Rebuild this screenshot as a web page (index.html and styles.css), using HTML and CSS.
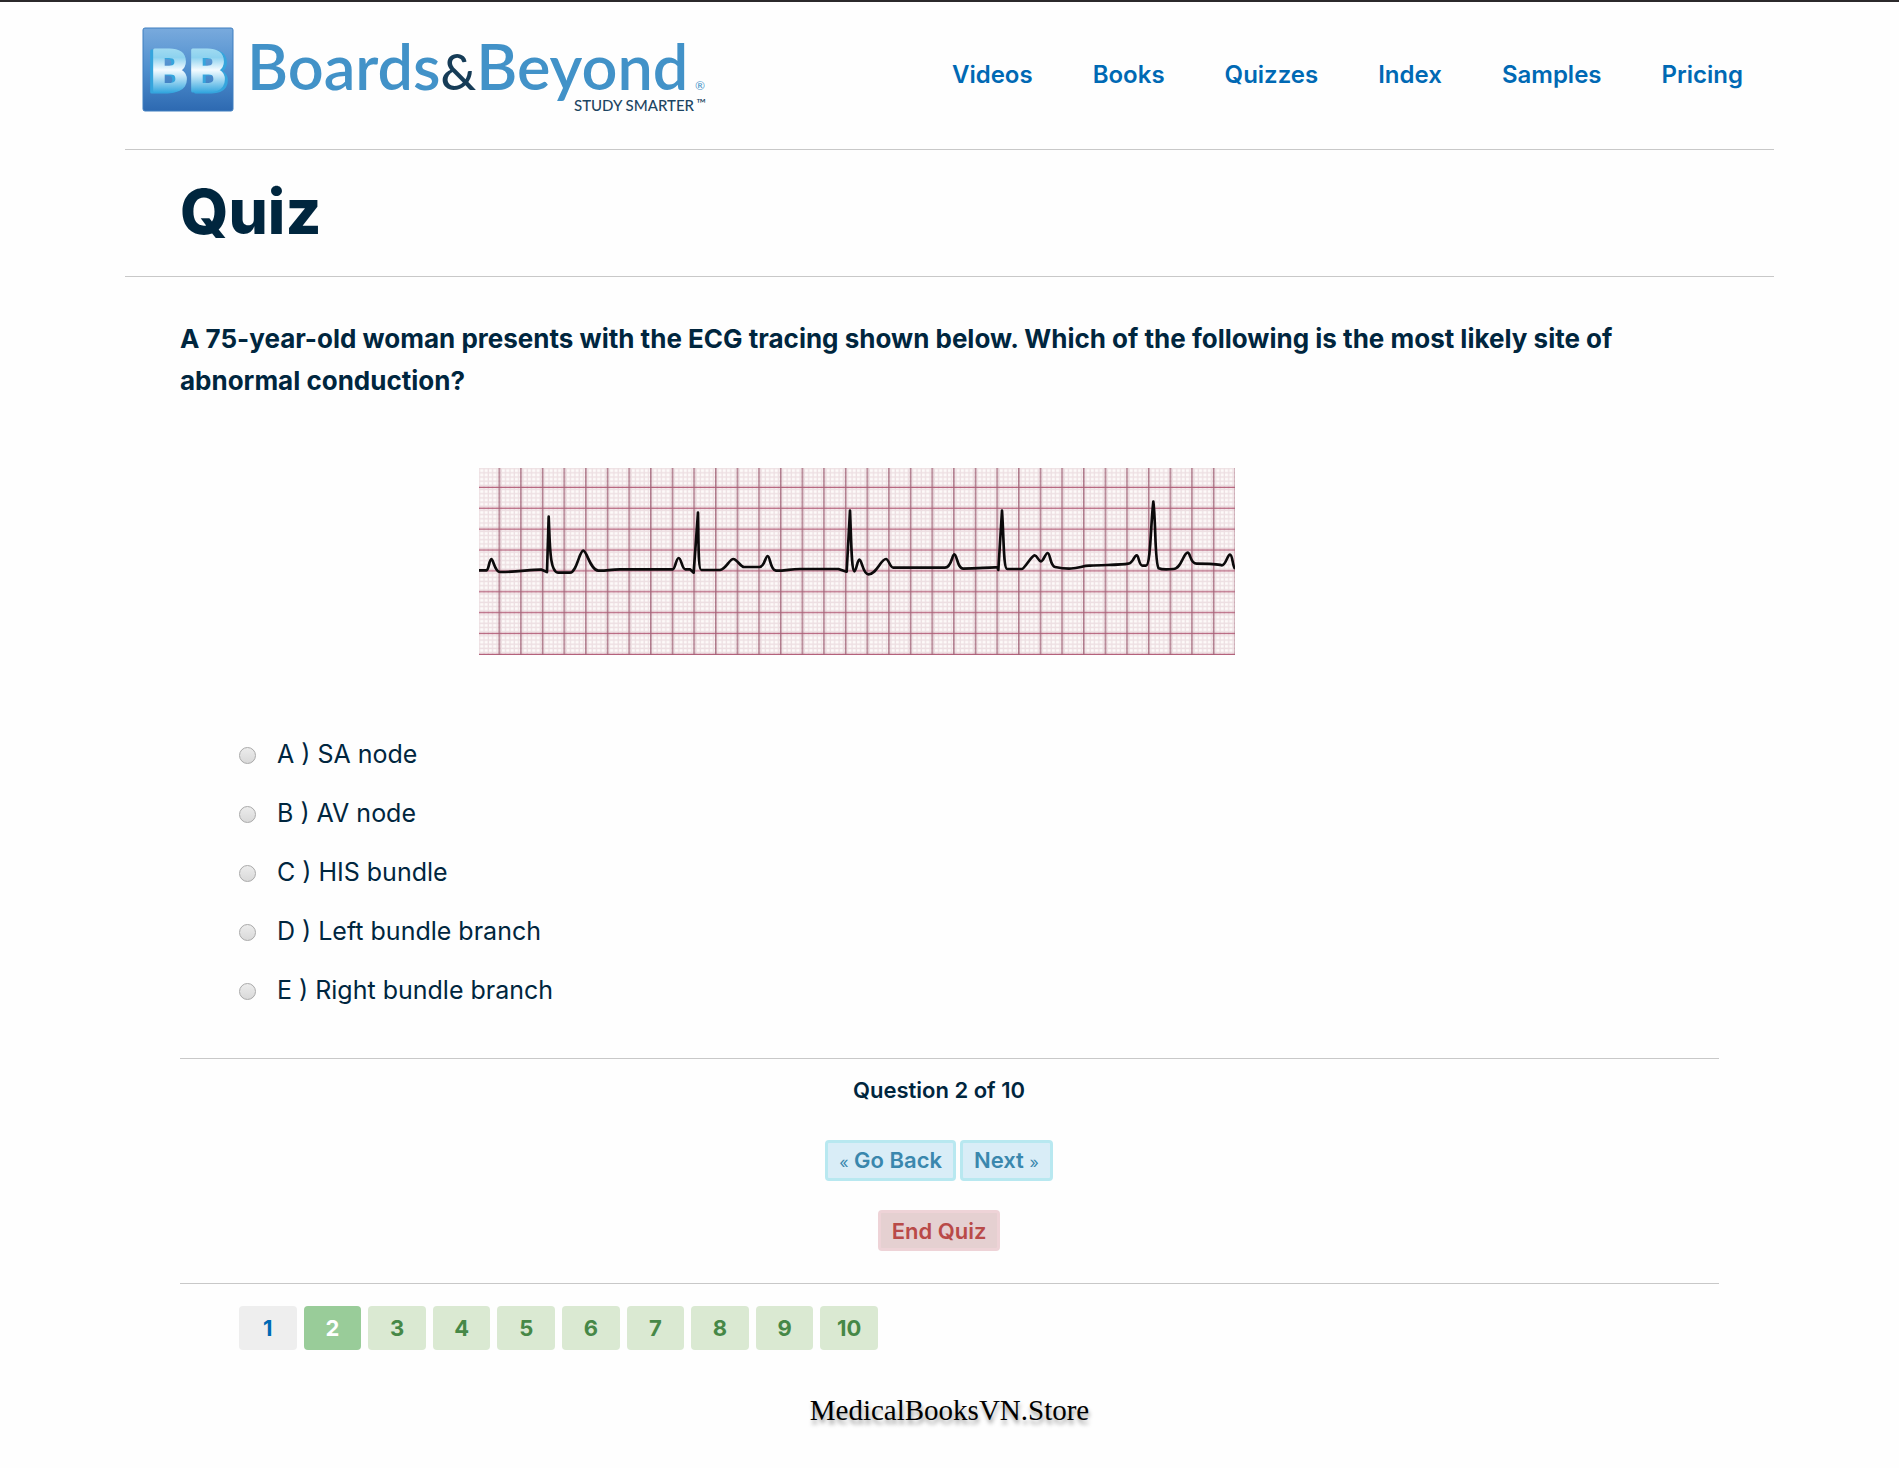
FILE: index.html
```
<!DOCTYPE html>
<html lang="en">
<head>
<meta charset="utf-8">
<meta name="viewport" content="width=device-width, initial-scale=1">
<title>Quiz - Boards&amp;Beyond</title>
<link rel="stylesheet" href="styles.css">
</head>
<body>
<div class="page">
  <header class="header">
    <a class="logo" href="#" aria-label="Boards&amp;Beyond, Study Smarter">
      <svg width="568" height="88" viewBox="0 0 568 88">
        <defs>
          <linearGradient id="tile" x1="0" y1="0" x2="0" y2="1">
            <stop offset="0" stop-color="#79aadd"/><stop offset=".5" stop-color="#4f8fce"/><stop offset="1" stop-color="#2d69b1"/>
          </linearGradient>
          <linearGradient id="face" gradientUnits="userSpaceOnUse" x1="0" y1="18" x2="0" y2="68">
            <stop offset="0" stop-color="#a8def2"/><stop offset=".25" stop-color="#8dd2ef"/><stop offset=".5" stop-color="#f4fbff"/><stop offset=".62" stop-color="#c4e7f8"/><stop offset="1" stop-color="#1f9ddb"/>
          </linearGradient>
        </defs>
        <rect x="1" y="1" width="90" height="83" rx="2" fill="url(#tile)" stroke="#3f7fc0"/>
        <text class="mark mark-left" x="9" y="64">B</text>
        <text class="mark mark-right" x="47" y="64">B</text>
        <text class="logo-name" x="105" y="63">Boards<tspan class="logo-amp">&amp;</tspan>Beyond</text>
        <text class="logo-reg" x="553" y="63">®</text>
        <text class="logo-tag" x="432" y="84">STUDY SMARTER</text>
        <text class="logo-tm" x="554" y="81">™</text>
      </svg>
    </a>
    <nav class="nav">
      <a href="#">Videos</a>
      <a href="#">Books</a>
      <a href="#">Quizzes</a>
      <a href="#">Index</a>
      <a href="#">Samples</a>
      <a href="#">Pricing</a>
    </nav>
  </header>

  <div class="title"><h1>Quiz</h1></div>

  <main class="content">
    <form>
      <p class="question" id="question">A 75-year-old woman presents with the ECG tracing shown below. Which of the following is the most likely site of abnormal conduction?</p>

      <svg class="ecg" viewBox="0 0 2268 561" role="img" aria-label="ECG tracing">
        <defs>
          <pattern id="minor" patternUnits="userSpaceOnUse" x="-4" y="-4" width="12.99" height="12.54">
            <path d="M0 6H13M6 0V13" stroke="#eddfe2" stroke-width="4" fill="none"/>
          </pattern>
          <pattern id="major" patternUnits="userSpaceOnUse" x="29" y="27" width="64.94" height="62.65">
            <path d="M0 31H65" stroke="#b4607a" stroke-width="4"/>
            <path d="M32 0V63" stroke="#a06276" stroke-width="4"/>
          </pattern>
        </defs>
        <rect width="2268" height="561" fill="#fdfaf9"/>
        <rect width="2268" height="561" fill="url(#minor)"/>
        <rect width="2268" height="561" fill="url(#major)"/>
        <path class="trace" transform="translate(-27 -24)" d="M20 331H50C56 331 58 297 64 297C70 297 74 336 90 336C130 337 190 328 215 329L231 336L236 170C240 250 238 338 265 338H300C320 338 328 272 340 272C350 272 362 332 385 332C410 333 420 328 450 328H608C616 328 618 294 626 294C634 294 636 328 646 328H660L671 338L684 158C686 240 684 330 694 330H750C768 328 778 297 790 297C800 297 812 321 822 321H868C884 321 886 288 893 288C901 288 900 330 918 332C950 332 960 327 990 327H1105L1130 335L1140 152C1144 240 1144 330 1153 334C1159 334 1162 299 1168 299C1176 299 1178 342 1195 343C1220 343 1232 297 1248 297C1256 297 1260 323 1270 323H1425C1445 323 1446 283 1453 283C1461 283 1462 327 1480 326C1530 326 1550 321 1583 322L1585 330L1596 152C1602 240 1600 327 1612 327H1655C1664 327 1684 286 1694 286C1702 286 1705 304 1713 304C1721 304 1726 279 1733 279C1741 279 1740 318 1755 321C1820 334 1830 316 1860 317C1900 314 1950 316 1975 311C1990 310 1992 286 2000 286C2007 286 2006 317 2018 317H2028C2042 317 2042 190 2050 125C2058 190 2054 310 2066 325C2075 329 2100 328 2110 327C2134 327 2140 278 2153 278C2162 278 2160 311 2180 311C2210 311 2240 311 2255 316C2268 316 2272 284 2280 284C2288 284 2288 322 2295 326"/>
      </svg>

      <div class="options" role="radiogroup" aria-labelledby="question">
        <label class="option"><input type="radio" name="answer" value="a">A ) SA node</label>
        <label class="option"><input type="radio" name="answer" value="b">B ) AV node</label>
        <label class="option"><input type="radio" name="answer" value="c">C ) HIS bundle</label>
        <label class="option"><input type="radio" name="answer" value="d">D ) Left bundle branch</label>
        <label class="option"><input type="radio" name="answer" value="e">E ) Right bundle branch</label>
      </div>

      <div class="controls">
        <p class="progress">Question 2 of 10</p>
        <div class="steps">
          <button class="btn" type="button"><span class="chevron">«</span> Go Back</button>
          <button class="btn" type="button">Next <span class="chevron">»</span></button>
        </div>
        <button class="btn btn-end" type="button">End Quiz</button>
      </div>
    </form>

    <nav class="pager" aria-label="Questions">
      <a class="seen" href="#">1</a>
      <a class="current" href="#" aria-current="page">2</a>
      <a href="#">3</a>
      <a href="#">4</a>
      <a href="#">5</a>
      <a href="#">6</a>
      <a href="#">7</a>
      <a href="#">8</a>
      <a href="#">9</a>
      <a href="#">10</a>
    </nav>
  </main>

  <footer class="footer">MedicalBooksVN.Store</footer>
</div>
</body>
</html>
```
FILE: styles.css
```
* { box-sizing: border-box; }

body {
  margin: 0;
  border-top: 2px solid #2b292b;
  background: #fefefe;
  color: #00263e;
  font-family: Inter, "Liberation Sans", sans-serif;
}

h1, p { margin: 0; }
a { text-decoration: none; }

.page {
  max-width: 1649px;
  margin: 0 auto;
}

/* Header */
.header {
  display: flex;
  align-items: center;
  justify-content: space-between;
  min-height: 148px;
  padding: 0 31px 2px 17px;
  border-bottom: 1px solid #c8c8c8;
}

.logo { align-self: flex-start; padding-top: 25px; }
.logo svg { display: block; }

.mark {
  font: 700 58px Roboto, sans-serif;
  fill: url(#face);
  stroke: url(#face);
  stroke-width: 3px;
  stroke-linejoin: round;
}
.mark-left { filter: drop-shadow(-3px 1px 0 #35a5dd); }
.mark-right { filter: drop-shadow(3px 1px 0 #35a5dd); }
.logo-name { font: 600 63px Lato, sans-serif; fill: #4292c8; }
.logo-amp { font-size: 50px; font-weight: 500; fill: #163c57; }
.logo-reg { font: 400 12px Lato, sans-serif; fill: #4292c8; }
.logo-tag { font: 500 15px Lato, sans-serif; fill: #1c4562; }
.logo-tm { font: 400 13px Lato, sans-serif; fill: #1c4562; }

.nav { display: flex; gap: 60px; }
.nav a {
  color: #0069b4;
  font-size: 24px;
  font-weight: 600;
  line-height: 32px;
}

/* Title */
.title {
  padding: 32px 55px 34px;
  border-bottom: 1px solid #c8c8c8;
}
.title h1 {
  font-size: 62px;
  font-weight: 800;
  line-height: 60px;
}

/* Question */
.content { padding: 41px 55px 0; }

.question {
  font-size: 26px;
  font-weight: 700;
  line-height: 42px;
}

.ecg {
  display: block;
  width: 100%;
  max-width: 756px;
  margin: 66px 0 70px 299px;
}
.trace {
  fill: none;
  stroke: #0c0a0b;
  stroke-width: 8px;
  stroke-linejoin: round;
}

.options { padding-left: 59px; }
.option {
  display: flex;
  align-items: center;
  gap: 21px;
  width: fit-content;
  font-size: 25px;
  line-height: 59px;
}
.option input {
  appearance: none;
  width: 17px;
  height: 17px;
  margin: 2px 0 0;
  border: 1px solid #a9a9a9;
  border-radius: 50%;
  background: linear-gradient(#ececec, #d9d9d9);
}
.option input:checked { background: radial-gradient(#444 35%, #dedede 40%); }

/* Controls */
.controls {
  display: flex;
  flex-direction: column;
  align-items: center;
  margin-top: 38px;
  padding: 15px 21px 32px 0;
  border-top: 1px solid #c8c8c8;
  border-bottom: 1px solid #c8c8c8;
}
.progress {
  font-size: 22px;
  font-weight: 600;
  line-height: 32px;
}
.steps {
  display: flex;
  gap: 4px;
  margin: 34px 0 29px;
}
.btn {
  height: 41px;
  padding: 0 11px;
  border: 3px solid #b8e8f0;
  border-radius: 4px;
  background: #d9edf7;
  color: #3a87ad;
  font: 600 22px/32px Inter, "Liberation Sans", sans-serif;
}
.chevron { font-weight: 400; font-size: 16px; }
.btn-end {
  border-color: #eed3d7;
  background: #e5d0d1;
  color: #b94a48;
}

/* Question pager */
.pager {
  display: grid;
  grid-template-columns: repeat(10, 1fr);
  gap: 7px;
  max-width: 639px;
  margin: 22px 0 0 59px;
}
.pager a {
  border-radius: 4px;
  background: #dae9d2;
  color: #468847;
  font-size: 22px;
  font-weight: 700;
  line-height: 44px;
  text-align: center;
}
.pager .seen { background: #eeeeee; color: #0069b4; }
.pager .current { background: #99cc99; color: #ffffff; }

/* Footer */
.footer {
  padding: 42px 0 40px;
  color: #000000;
  font: 29px/36px "Liberation Serif", serif;
  text-align: center;
  text-shadow: 1px 4px 4px rgba(0, 0, 0, 0.4);
}
```
